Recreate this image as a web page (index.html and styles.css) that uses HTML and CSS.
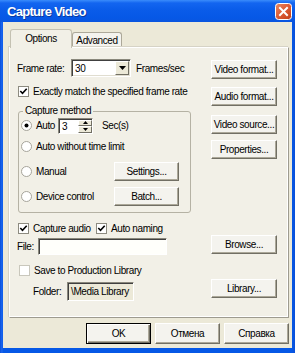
FILE: index.html
```html
<!DOCTYPE html>
<html>
<head>
<meta charset="utf-8">
<link rel="stylesheet" href="styles.css">
</head>
<body>
<div class="win">
  <div class="titlebar">
    <span class="title">Capture Video</span>
    <span class="close"><svg width="17" height="17" viewBox="0 0 17 17"><defs><linearGradient id="cg" x1="0" y1="0" x2="1" y2="1"><stop offset="0" stop-color="#ea8a66"/><stop offset="0.5" stop-color="#dc5a34"/><stop offset="1" stop-color="#c23f17"/></linearGradient></defs><rect x="0.5" y="0.5" width="16" height="16" rx="3" fill="url(#cg)" stroke="#fff"/><path d="M5 5 L12 12 M12 5 L5 12" stroke="#fff" stroke-width="2" stroke-linecap="square"/></svg></span>
  </div>
  <div class="client">
    <div class="tabs">
      <div class="tab tab-active">Options</div>
      <div class="tab">Advanced</div>
    </div>
    <div class="panel">
      <div class="left">
        <div class="row row-fr">
          <span class="lbl-fr">Frame rate:</span>
          <span class="combo"><span class="combo-text">30</span><span class="combo-btn"><svg width="7" height="4" viewBox="0 0 7 4"><path d="M0 0 H7 L3.5 4 Z" fill="#000"/></svg></span></span>
          <span class="fps">Frames/sec</span>
        </div>
        <div class="row row-cb row-exact">
          <svg class="cb" width="11" height="11" viewBox="0 0 11 11"><rect x="0.5" y="0.5" width="10" height="10" fill="#fff" stroke="#8d8b80"/><path d="M2.3 5 L4.5 7.3 L8.7 2.8" fill="none" stroke="#000" stroke-width="1.6"/></svg>
          <span class="cb-text">Exactly match the specified frame rate</span>
        </div>
        <fieldset class="group">
          <legend class="legend">Capture method</legend>
          <div class="grow grow-a">
            <svg class="rb" width="11" height="11" viewBox="0 0 11 11"><circle cx="5.5" cy="5.5" r="5" fill="#fff" stroke="#a6a49a"/><circle cx="5.5" cy="5.5" r="2" fill="#000"/></svg>
            <span class="rb-text w-auto">Auto</span>
            <span class="spin"><span class="spin-text">3</span><span class="spin-btns"><span class="spin-btn"><svg width="5" height="3" viewBox="0 0 5 3"><path d="M0 3 H5 L2.5 0 Z" fill="#000"/></svg></span><span class="spin-btn"><svg width="5" height="3" viewBox="0 0 5 3"><path d="M0 0 H5 L2.5 3 Z" fill="#000"/></svg></span></span></span>
            <span class="secs">Sec(s)</span>
          </div>
          <div class="grow grow-b">
            <svg class="rb" width="11" height="11" viewBox="0 0 11 11"><circle cx="5.5" cy="5.5" r="5" fill="#fff" stroke="#a6a49a"/></svg>
            <span class="rb-text">Auto without time limit</span>
          </div>
          <div class="grow grow-c">
            <svg class="rb" width="11" height="11" viewBox="0 0 11 11"><circle cx="5.5" cy="5.5" r="5" fill="#fff" stroke="#a6a49a"/></svg>
            <span class="rb-text w-long">Manual</span>
            <span class="btn btn-grp">Settings...</span>
          </div>
          <div class="grow grow-d">
            <svg class="rb" width="11" height="11" viewBox="0 0 11 11"><circle cx="5.5" cy="5.5" r="5" fill="#fff" stroke="#a6a49a"/></svg>
            <span class="rb-text w-long">Device control</span>
            <span class="btn btn-grp">Batch...</span>
          </div>
        </fieldset>
        <div class="row row-cb row-audio">
          <svg class="cb" width="11" height="11" viewBox="0 0 11 11"><rect x="0.5" y="0.5" width="10" height="10" fill="#fff" stroke="#8d8b80"/><path d="M2.3 5 L4.5 7.3 L8.7 2.8" fill="none" stroke="#000" stroke-width="1.6"/></svg>
          <span class="cb-text w-audio">Capture audio</span>
          <svg class="cb" width="11" height="11" viewBox="0 0 11 11"><rect x="0.5" y="0.5" width="10" height="10" fill="#fff" stroke="#8d8b80"/><path d="M2.3 5 L4.5 7.3 L8.7 2.8" fill="none" stroke="#000" stroke-width="1.6"/></svg>
          <span class="cb-text">Auto naming</span>
        </div>
        <div class="row row-file">
          <span class="lbl-file">File:</span>
          <span class="input input-file"></span>
        </div>
        <div class="row row-cb row-save">
          <svg class="cb" width="11" height="11" viewBox="0 0 11 11"><rect x="0.5" y="0.5" width="10" height="10" fill="#fff" stroke="#c9c7bc"/></svg>
          <span class="cb-text">Save to Production Library</span>
        </div>
        <div class="row row-folder">
          <span class="lbl-folder">Folder:</span>
          <span class="input input-folder">\Media Library</span>
        </div>
      </div>
      <div class="right">
        <span class="btn btn-side b-vf">Video format...</span>
        <span class="btn btn-side b-af">Audio format...</span>
        <span class="btn btn-side b-vs">Video source...</span>
        <span class="btn btn-side b-pr">Properties...</span>
        <span class="btn btn-side b-br">Browse...</span>
        <span class="btn btn-side b-li">Library...</span>
      </div>
    </div>
    <div class="footer">
      <span class="btn btn-foot btn-default">OK</span>
      <span class="btn btn-foot">Отмена</span>
      <span class="btn btn-foot">Справка</span>
    </div>
  </div>
</div>
</body>
</html>
```

FILE: styles.css
```css
* { box-sizing: border-box; }
html, body { margin: 0; padding: 0; }
body {
  width: 295px;
  height: 353px;
  overflow: hidden;
  font-family: "Liberation Sans", Arial, sans-serif;
  font-size: 10px;
  letter-spacing: -0.4px;
  color: #000;
  background: #0054e3;
}
.win {
  width: 295px;
  height: 353px;
  display: flex;
  flex-direction: column;
  background: linear-gradient(90deg, #0a4fd8 0px, #1c68f2 2px, #0658e6 3px, #0658e6 292px, #0a4fd8 295px);
}
.titlebar {
  height: 22px;
  flex: none;
  display: flex;
  align-items: center;
  justify-content: space-between;
  padding: 0 3px 0 7px;
  background: linear-gradient(180deg, #3a8cfb 0px, #1365f0 3px, #0a5ce9 10px, #0658e6 18px, #0a55df 22px);
}
.title {
  color: #fff;
  font-weight: bold;
  font-size: 13px;
  letter-spacing: -0.7px;
  text-shadow: 1px 1px 0 #0b3a9e;
}
.close { width: 17px; height: 17px; display: block; }
.close svg { display: block; }
.client {
  flex: 1;
  margin: 0 3px 5px 3px;
  background: #ece9d8;
  display: flex;
  flex-direction: column;
}
.tabs {
  height: 26px;
  flex: none;
  display: flex;
  align-items: flex-end;
  padding: 0 0 0 7px;
}
.tab {
  height: 16px;
  width: 50px;
  border: 1px solid #aca899;
  border-bottom: none;
  border-radius: 3px 3px 0 0;
  background: #f4f3ee;
  display: flex;
  align-items: center;
  justify-content: center;
  padding-bottom: 1px;
}
.tab-active {
  position: relative;
  z-index: 1;
  width: 62px;
  height: 19px;
  background: #f2f0e7;
  border-color: #c4c1b2;
  padding-bottom: 2px;
}
.panel {
  flex: none;
  height: 271px;
  margin: -1px 3px 0 6px;
  background: #f2f0e7;
  border: 1px solid;
  border-color: #fff #9e9b8f #9e9b8f #fff;
  box-shadow: inset -1px -1px 0 #fff, -1px -1px 0 #d6d3c6;
  display: flex;
}
.left {
  flex: 1;
  padding-left: 7px;
  display: flex;
  flex-direction: column;
  align-items: flex-start;
}
.right {
  width: 66px;
  margin-right: 11px;
  display: flex;
  flex-direction: column;
}
.row { display: flex; align-items: center; }
.row-fr { margin-top: 11px; height: 18px; }
.lbl-fr { width: 54px; }
.combo {
  width: 60px;
  height: 18px;
  background: #fff;
  border: 1px solid;
  border-color: #8a887c #fff #fff #8a887c;
  box-shadow: inset 1px 1px 0 #404040, inset -1px -1px 0 #e0ddd0;
  display: flex;
  align-items: stretch;
  padding: 1px;
}
.combo-text { flex: 1; padding-left: 2px; display: flex; align-items: center; }
.combo-btn {
  width: 14px;
  background: #ece9d8;
  border: 1px solid;
  border-color: #fff #716f64 #716f64 #fff;
  display: flex;
  align-items: center;
  justify-content: center;
}
.combo-btn svg, .spin-btn svg, .cb, .rb { display: block; flex: none; }
.fps { margin-left: 5px; }
.row-cb { height: 13px; }
.row-exact { margin-top: 8px; }
.cb { margin-left: 1px; }
.cb-text { margin-left: 4px; }
.group {
  margin: 8px 0 0 1px;
  width: 173px;
  padding: 0 0 6px 2px;
  border: 1px solid #b5b2a4;
  border-radius: 3px;
  min-width: 0;
}
.legend {
  padding: 0 2px;
  margin-left: 2px;
  line-height: 10px;
  height: 10px;
}
.grow { display: flex; align-items: center; height: 19px; }
.grow-b { margin-top: 2px; }
.grow-c { margin-top: 6px; }
.grow-d { margin-top: 6px; }
.rb-text { margin-left: 4px; }
.w-auto { width: 22px; }
.w-long { width: 78px; }
.spin {
  width: 35px;
  height: 16px;
  display: flex;
  background: #fff;
  border: 1px solid;
  border-color: #8a887c #fff #fff #8a887c;
  box-shadow: inset 1px 1px 0 #404040;
  padding: 1px 0 0 1px;
}
.spin-text { flex: 1; padding-left: 2px; display: flex; align-items: center; }
.spin-btns { width: 14px; display: flex; flex-direction: column; }
.spin-btn {
  flex: 1;
  background: #ece9d8;
  border: 1px solid;
  border-color: #fff #716f64 #716f64 #fff;
  display: flex;
  align-items: center;
  justify-content: center;
}
.secs { margin-left: 9px; }
.btn {
  display: flex;
  align-items: center;
  justify-content: center;
  background: #f4f3ee;
  border: 1px solid;
  border-color: #fff #716f64 #716f64 #fff;
  box-shadow: inset -1px -1px 0 #aca899;
  white-space: nowrap;
}
.btn-grp { width: 65px; height: 19px; }
.btn-side { width: 66px; height: 19px; flex: none; }
.b-vf { margin-top: 12px; }
.b-af { margin-top: 8px; }
.b-vs { margin-top: 9px; }
.b-pr { margin-top: 6px; }
.b-br { margin-top: 76px; }
.b-li { margin-top: 25px; }
.row-audio { margin-top: 9px; }
.w-audio { width: 62px; }
.row-file { margin-top: 3px; height: 17px; }
.lbl-file { width: 21px; }
.input {
  height: 17px;
  background: #fffffb;
  border: 1px solid;
  border-color: #8a887c #fff #fff #8a887c;
  box-shadow: inset 1px 1px 0 #404040;
  display: flex;
  align-items: center;
}
.input-file { width: 129px; }
.row-save { margin-top: 9px; }
.row-save .cb { margin-left: 2px; }
.row-folder { margin-top: 5px; height: 19px; }
.lbl-folder { width: 34px; margin-left: 16px; }
.input-folder {
  width: 67px;
  height: 19px;
  background: #ece9d8;
  padding-left: 3px;
  white-space: nowrap;
  overflow: hidden;
}
.footer {
  flex: 1;
  display: flex;
  justify-content: flex-end;
  align-items: flex-start;
  padding: 5px 3px 0 0;
  gap: 4px;
}
.btn-foot { width: 65px; height: 21px; }
.btn-default {
  border-color: #000;
  box-shadow: inset 1px 1px 0 #fff, inset -1px -1px 0 #716f64, inset -2px -2px 0 #aca899;
}
```
